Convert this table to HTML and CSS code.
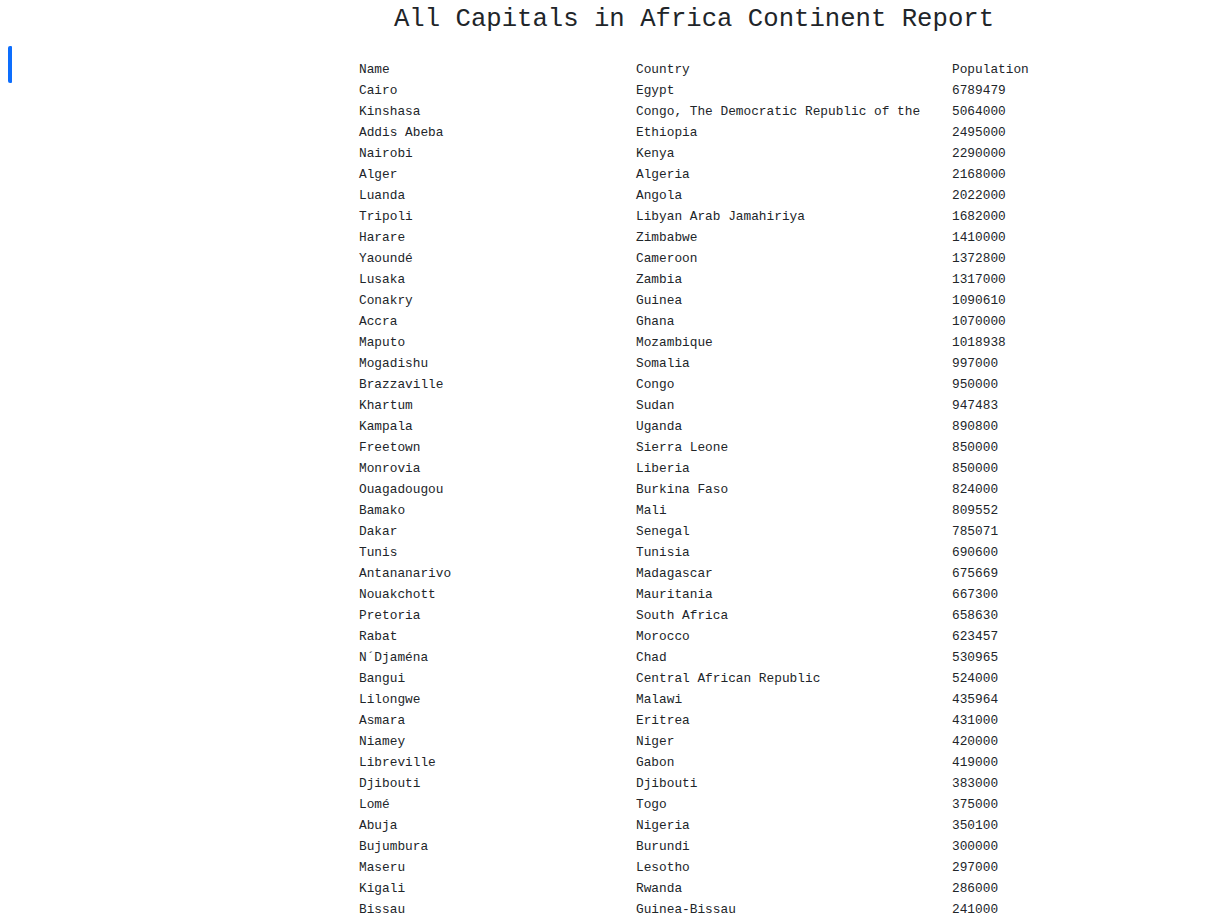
FILE: index.html
```html
<!DOCTYPE html>
<html lang="en">
<head>
<meta charset="utf-8">
<title>All Capitals in Africa Continent Report</title>
<link rel="stylesheet" href="styles.css">
</head>
<body>
<div class="page">
  <aside class="sidebar"><div class="bar"></div></aside>
  <main class="main">
    <h1 class="title">All Capitals in Africa Continent Report</h1>
    <table class="report">
      <thead>
        <tr><th class="c-name">Name</th><th class="c-country">Country</th><th class="c-pop">Population</th></tr>
      </thead>
      <tbody>
        <tr><td>Cairo</td><td>Egypt</td><td>6789479</td></tr>
        <tr><td>Kinshasa</td><td>Congo, The Democratic Republic of the</td><td>5064000</td></tr>
        <tr><td>Addis Abeba</td><td>Ethiopia</td><td>2495000</td></tr>
        <tr><td>Nairobi</td><td>Kenya</td><td>2290000</td></tr>
        <tr><td>Alger</td><td>Algeria</td><td>2168000</td></tr>
        <tr><td>Luanda</td><td>Angola</td><td>2022000</td></tr>
        <tr><td>Tripoli</td><td>Libyan Arab Jamahiriya</td><td>1682000</td></tr>
        <tr><td>Harare</td><td>Zimbabwe</td><td>1410000</td></tr>
        <tr><td>Yaoundé</td><td>Cameroon</td><td>1372800</td></tr>
        <tr><td>Lusaka</td><td>Zambia</td><td>1317000</td></tr>
        <tr><td>Conakry</td><td>Guinea</td><td>1090610</td></tr>
        <tr><td>Accra</td><td>Ghana</td><td>1070000</td></tr>
        <tr><td>Maputo</td><td>Mozambique</td><td>1018938</td></tr>
        <tr><td>Mogadishu</td><td>Somalia</td><td>997000</td></tr>
        <tr><td>Brazzaville</td><td>Congo</td><td>950000</td></tr>
        <tr><td>Khartum</td><td>Sudan</td><td>947483</td></tr>
        <tr><td>Kampala</td><td>Uganda</td><td>890800</td></tr>
        <tr><td>Freetown</td><td>Sierra Leone</td><td>850000</td></tr>
        <tr><td>Monrovia</td><td>Liberia</td><td>850000</td></tr>
        <tr><td>Ouagadougou</td><td>Burkina Faso</td><td>824000</td></tr>
        <tr><td>Bamako</td><td>Mali</td><td>809552</td></tr>
        <tr><td>Dakar</td><td>Senegal</td><td>785071</td></tr>
        <tr><td>Tunis</td><td>Tunisia</td><td>690600</td></tr>
        <tr><td>Antananarivo</td><td>Madagascar</td><td>675669</td></tr>
        <tr><td>Nouakchott</td><td>Mauritania</td><td>667300</td></tr>
        <tr><td>Pretoria</td><td>South Africa</td><td>658630</td></tr>
        <tr><td>Rabat</td><td>Morocco</td><td>623457</td></tr>
        <tr><td>N´Djaména</td><td>Chad</td><td>530965</td></tr>
        <tr><td>Bangui</td><td>Central African Republic</td><td>524000</td></tr>
        <tr><td>Lilongwe</td><td>Malawi</td><td>435964</td></tr>
        <tr><td>Asmara</td><td>Eritrea</td><td>431000</td></tr>
        <tr><td>Niamey</td><td>Niger</td><td>420000</td></tr>
        <tr><td>Libreville</td><td>Gabon</td><td>419000</td></tr>
        <tr><td>Djibouti</td><td>Djibouti</td><td>383000</td></tr>
        <tr><td>Lomé</td><td>Togo</td><td>375000</td></tr>
        <tr><td>Abuja</td><td>Nigeria</td><td>350100</td></tr>
        <tr><td>Bujumbura</td><td>Burundi</td><td>300000</td></tr>
        <tr><td>Maseru</td><td>Lesotho</td><td>297000</td></tr>
        <tr><td>Kigali</td><td>Rwanda</td><td>286000</td></tr>
        <tr><td>Bissau</td><td>Guinea-Bissau</td><td>241000</td></tr>
        <tr><td>Porto-Novo</td><td>Benin</td><td>194000</td></tr>
        <tr><td>Windhoek</td><td>Namibia</td><td>169000</td></tr>
        <tr><td>Banjul</td><td>Gambia</td><td>42326</td></tr>
      </tbody>
    </table>
  </main>
</div>
</body>
</html>
```

FILE: styles.css
```css
html, body {
  margin: 0;
  padding: 0;
  background: #ffffff;
}

body {
  font-family: "Liberation Mono", "DejaVu Sans Mono", monospace;
  color: #212529;
}

.page {
  display: flex;
  align-items: flex-start;
}

.sidebar {
  flex: 0 0 176px;
  padding: 46px 0 0 8px;
  box-sizing: border-box;
}

.bar {
  width: 4px;
  height: 37px;
  background: #0d6efd;
  border-radius: 2px 1px 1px 2px;
}

.main {
  flex: 1;
  display: flex;
  flex-direction: column;
  align-items: center;
}

.title {
  margin: 0;
  padding-top: 5px;
  font-size: 25.65px;
  line-height: 30px;
  font-weight: normal;
  color: #212529;
}

.report {
  border-collapse: collapse;
  margin-top: 24px;
  font-size: 12.8px;
  line-height: 21px;
}

.report th,
.report td {
  padding: 0;
  text-align: left;
  font-weight: normal;
  white-space: nowrap;
  vertical-align: middle;
}

.c-name { width: 277px; }
.c-country { width: 316px; }
.c-pop { width: 77px; }
```
